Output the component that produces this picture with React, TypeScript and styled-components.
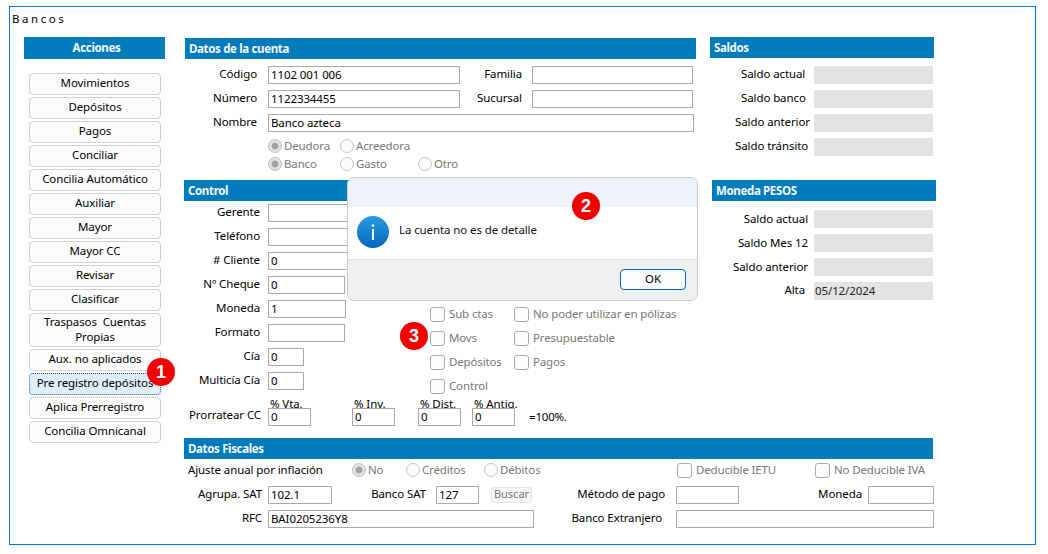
import React from "react";
import styled, { createGlobalStyle } from "styled-components";

const Global = createGlobalStyle`
  html, body { margin: 0; padding: 0; background: #fff; }
  body { font-family: "Noto Sans", "Open Sans", sans-serif; font-size: 11.5px; color: #000; letter-spacing: -0.1px; }
  * { box-sizing: border-box; }
`;

const Frame = styled.div`
  position: relative; margin: 6px 0 0 9px; width: 1027px; height: 539px;
  border: 1px solid #0f78cc; padding: 4px 0 0 14px; overflow: hidden;
`;
const Title = styled.div`
  height: 26px; line-height: 15px; margin-left: -12px; letter-spacing: 2.55px;
`;
const Layout = styled.div`
  display: grid; grid-template-columns: 141px 512px 226px; column-gap: 19px;
  grid-template-rows: 401px auto;
  & > :nth-child(3) { margin-left: -5px; }
`;
const Side = styled.aside`grid-row: 1 / span 2;`;
const Header = styled.div<{ $center?: boolean; $top?: number; $left?: number; $w?: number; $h?: number }>`
  height: ${p => p.$h ?? 21}px; line-height: 22px; background: #027bbb; color: #f4f8fb; font-weight: 700;
  padding-left: 4px; font-size: 11.5px; letter-spacing: -0.35px;
  text-align: ${p => (p.$center ? "center" : "left")};
  margin-top: ${p => p.$top ?? 0}px; margin-left: ${p => p.$left ?? 0}px;
  width: ${p => (p.$w ? `${p.$w}px` : "auto")};
`;
const Buttons = styled.div`
  display: flex; flex-direction: column; gap: 2px; margin: 14px 4px 0 5px;
`;
const ActionButton = styled.button<{ $focus?: boolean; $tall?: boolean }>`
  width: 132px; height: ${p => (p.$tall ? 34 : 22)}px; padding: 0 0 3px; font: inherit; letter-spacing: inherit; color: #000;
  line-height: 15px; border-radius: 4px;
  background: ${p => (p.$focus ? "#e0eef9" : "#fdfdfd")};
  border: 1px ${p => (p.$focus ? "dotted #0067c0" : "solid #d0d0d0")};
`;
const Section = styled.section``;
const Rows = styled.div<{ $top?: number }>`
  display: flex; flex-direction: column; gap: 6px; margin-top: ${p => p.$top ?? 6}px;
`;
const Row = styled.div`
  display: flex; align-items: center; height: 18px; white-space: nowrap;
`;
const Label = styled.label<{ $w: number; $gap?: number; $align?: string; $pl?: number; $up?: number }>`
  flex: none; width: ${p => p.$w}px; margin-right: ${p => p.$gap ?? 8}px;
  padding-left: ${p => p.$pl ?? 0}px;
  text-align: ${p => p.$align ?? "right"}; margin-top: -${p => p.$up ?? 3}px; line-height: 15px;
`;
const Input = styled.div<{ $w: number; $ml?: number }>`
  flex: none; width: ${p => p.$w}px; height: 18px; margin-left: ${p => p.$ml ?? 0}px;
  border: 1px solid #a9a9a9; background: #fff; padding-left: 2px; line-height: 15px;
  position: relative; overflow: hidden;
`;
const ReadOnly = styled.div`
  flex: none; width: 119px; height: 18px; background: #e3e3e3; padding-left: 1px; line-height: 17px; color: #222;
`;
const Choices = styled.div`
  display: grid; grid-auto-rows: 18px; margin: 5px 0 0 84px;
`;
const ChoiceRow = styled.div`display: flex; height: 18px; align-items: center;`;
const Choice = styled.span<{ $w?: number }>`
  display: inline-flex; align-items: center; gap: 2px; color: #777; white-space: nowrap; letter-spacing: -0.15px;
  width: ${p => (p.$w ? `${p.$w}px` : "auto")}; flex: none; line-height: 15px;
`;
const ChoiceText = styled.span`margin-top: -1px;`;
const RadioMark = styled.i<{ $on?: boolean }>`
  flex: none; width: 14px; height: 14px; border-radius: 50%; position: relative;
  border: 1px solid ${p => (p.$on ? "#bdbdbd" : "#c4c4c4")};
  background: ${p => (p.$on ? "radial-gradient(circle, #a2a2a2 0 3.2px, #e2e2e2 3.8px)" : "#fbfbfb")};
`;
const CheckMark = styled.i`
  flex: none; width: 15px; height: 15px; border-radius: 3px; border: 1.5px solid #ababab; background: #fdfdfd;
  margin-right: 2px;
`;
const ControlBody = styled.div`
  display: grid; grid-template-columns: 246px 1fr; margin-top: 1px;
`;
const Checks = styled.div`
  display: grid; grid-template-columns: 84px auto; grid-auto-rows: 24px; padding-top: 100px; align-items: center;
`;
const Prorate = styled.div`
  display: flex; align-items: flex-end; height: 29px; white-space: nowrap; margin-top: -1px;
`;
const ProrateLabel = styled.label`
  width: 77px; text-align: right; margin-right: 7px; line-height: 15px; padding-bottom: 4px;
`;
const Percent = styled.div<{ $ml: number }>`
  flex: none; width: 43px; margin-left: ${p => p.$ml}px; display: flex; flex-direction: column;
`;
const Caption = styled.span`
  height: 11px; line-height: 14px; padding-left: 2px; white-space: nowrap;
`;
const Equal = styled.span`margin: 0 0 1px 14px; line-height: 16px; letter-spacing: -0.2px;`;
const Fiscal = styled.section`grid-column: 2 / span 2; width: 749px; margin-top: 0;`;
const FiscalTop = styled(Row)`margin-top: 2px;`;
const Buscar = styled.button`
  flex: none; width: 41px; height: 16px; margin-left: 12px; padding: 0 0 2px; font: inherit; font-size: 11px; color: #777;
  border: 1px solid #e4e4e4; border-radius: 3px; background: #f6f6f6; line-height: 12px;
`;

const Modal = styled.div`
  position: absolute; left: 337px; top: 170px; width: 351px; height: 124px; border-radius: 7px;
  border: 1px solid #c9c9c9; overflow: hidden; background: #fff; display: flex; flex-direction: column;
`;
const ModalTop = styled.div`height: 29px; background: #eef2fa;`;
const ModalBody = styled.div`
  height: 52px; display: flex; align-items: center; gap: 10px; padding: 0 0 2px 9px; background: #fff; color: #111;
`;
const ModalText = styled.span`margin-top: -6px;`;
const ModalFoot = styled.div`
  flex: 1; background: #f0f0f0; border-top: 1px solid #dfdfdf; display: flex; justify-content: flex-end;
  align-items: flex-start; padding: 9px 11px 0 0;
`;
const OkButton = styled.button`
  width: 66px; height: 21px; padding: 0 0 3px; font: inherit; border: 1px solid #0067c0; border-radius: 4px; background: #fdfdfd; color: #000;
`;
const Badge = styled.span<{ $x: number; $y: number }>`
  position: absolute; left: ${p => p.$x}px; top: ${p => p.$y}px; width: 28px; height: 28px; border-radius: 50%;
  background: #f00000; color: #fff; font: 700 18px/28px "Liberation Sans", sans-serif; text-align: center;
`;

const actions = ["Movimientos", "Depósitos", "Pagos", "Conciliar", "Concilia Automático", "Auxiliar", "Mayor", "Mayor CC", "Revisar", "Clasificar"];
const after = ["Aux. no aplicados", "Pre registro depósitos", "Aplica Prerregistro", "Concilia Omnicanal"];

const Radio = ({ on, w, children }: { on?: boolean; w?: number; children: string }) => (
  <Choice $w={w}><RadioMark $on={on} /><ChoiceText>{children}</ChoiceText></Choice>
);
const Check = ({ w, children }: { w?: number; children: string }) => (
  <Choice $w={w}><CheckMark /><ChoiceText>{children}</ChoiceText></Choice>
);
const InfoIcon = () => (
  <svg width="32" height="32" viewBox="0 0 32 32">
    <defs>
      <linearGradient id="info" x1="0" y1="0" x2="0" y2="1">
        <stop offset="0" stopColor="#2a9be0" />
        <stop offset="1" stopColor="#0566bd" />
      </linearGradient>
    </defs>
    <circle cx="16" cy="16" r="16" fill="url(#info)" />
    <circle cx="16" cy="9.5" r="1.3" fill="#fff" />
    <rect x="15" y="13" width="2" height="11" fill="#fff" />
  </svg>
);

export default function App() {
  return (
    <>
      <Global />
      <Frame>
        <Title>Bancos</Title>
        <Layout>
          <Side>
            <Header $center $h={22}>Acciones</Header>
            <Buttons>
              {actions.map(a => <ActionButton key={a}>{a}</ActionButton>)}
              <ActionButton $tall>Traspasos&nbsp; Cuentas<br />Propias</ActionButton>
              {after.map(a => <ActionButton key={a} $focus={a.startsWith("Pre")}>{a}</ActionButton>)}
            </Buttons>
          </Side>
          <Section>
            <Header $top={1} $left={1}>Datos de la cuenta</Header>
            <Rows $top={7}>
              <Row>
                <Label $w={73} $gap={11}>Código</Label><Input $w={192}>1102 001 006</Input>
                <Label $w={62}>Familia</Label><Input $w={161} $ml={2}></Input>
              </Row>
              <Row>
                <Label $w={73} $gap={11}>Número</Label><Input $w={192}>1122334455</Input>
                <Label $w={62}>Sucursal</Label><Input $w={161} $ml={2}></Input>
              </Row>
              <Row>
                <Label $w={73} $gap={11}>Nombre</Label><Input $w={426}>Banco azteca</Input>
              </Row>
            </Rows>
            <Choices>
              <ChoiceRow><Radio on w={72}>Deudora</Radio><Radio w={78}>Acreedora</Radio></ChoiceRow>
              <ChoiceRow><Radio on w={72}>Banco</Radio><Radio w={78}>Gasto</Radio><Radio>Otro</Radio></ChoiceRow>
            </Choices>
            <Header $top={7}>Control</Header>
            <ControlBody>
              <Rows $top={2}>
                <Row><Label $w={76}>Gerente</Label><Input $w={120}></Input></Row>
                <Row><Label $w={76}>Teléfono</Label><Input $w={120}></Input></Row>
                <Row><Label $w={76}># Cliente</Label><Input $w={120}>0</Input></Row>
                <Row><Label $w={76}>Nº Cheque</Label><Input $w={77}>0</Input></Row>
                <Row><Label $w={76}>Moneda</Label><Input $w={78}>1</Input></Row>
                <Row><Label $w={76}>Formato</Label><Input $w={77}></Input></Row>
                <Row><Label $w={76}>Cía</Label><Input $w={36}>0</Input></Row>
                <Row><Label $w={76}>Multicía Cía</Label><Input $w={36}>0</Input></Row>
              </Rows>
              <Checks>
                <Check>Sub ctas</Check><Check>No poder utilizar en pólizas</Check>
                <Check>Movs</Check><Check>Presupuestable</Check>
                <Check>Depósitos</Check><Check>Pagos</Check>
                <Check>Control</Check>
              </Checks>
            </ControlBody>
            <Prorate>
              <ProrateLabel>Prorratear CC</ProrateLabel>
              <Percent $ml={0}><Caption>% Vta.</Caption><Input $w={43}>0</Input></Percent>
              <Percent $ml={41}><Caption>% Inv.</Caption><Input $w={43}>0</Input></Percent>
              <Percent $ml={23}><Caption>% Dist.</Caption><Input $w={43}>0</Input></Percent>
              <Percent $ml={11}><Caption>% Antig.</Caption><Input $w={43}>0</Input></Percent>
              <Equal>=100%.</Equal>
            </Prorate>
          </Section>
          <Section>
            <Header $w={224}>Saldos</Header>
            <Rows $top={8}>
              <Row><Label $w={104} $gap={0} $align="left" $pl={31}>Saldo actual</Label><ReadOnly /></Row>
              <Row><Label $w={104} $gap={0} $align="left" $pl={31}>Saldo banco</Label><ReadOnly /></Row>
              <Row><Label $w={104} $gap={0} $align="left" $pl={25}>Saldo anterior</Label><ReadOnly /></Row>
              <Row><Label $w={104} $gap={0} $align="left" $pl={25}>Saldo tránsito</Label><ReadOnly /></Row>
            </Rows>
            <Header $top={24} $left={2} $w={224}>Moneda PESOS</Header>
            <Rows $top={9}>
              <Row><Label $w={98} $gap={6} $up={1}>Saldo actual</Label><ReadOnly /></Row>
              <Row><Label $w={98} $gap={6} $up={1}>Saldo Mes 12</Label><ReadOnly /></Row>
              <Row><Label $w={98} $gap={6} $up={1}>Saldo anterior</Label><ReadOnly /></Row>
              <Row><Label $w={95} $gap={9}>Alta</Label><ReadOnly>05/12/2024</ReadOnly></Row>
            </Rows>
          </Section>
          <Fiscal>
            <Header>Datos Fiscales</Header>
            <FiscalTop>
              <Label $w={168} $gap={0} $align="left" $pl={4} $up={1}>Ajuste anual por inflación</Label>
              <Radio on w={54}>No</Radio><Radio w={78}>Créditos</Radio><Radio w={193}>Débitos</Radio>
              <Check w={138}>Deducible IETU</Check><Check>No Deducible IVA</Check>
            </FiscalTop>
            <Rows $top={7}>
              <Row>
                <Label $w={78} $gap={6}>Agrupa. SAT</Label><Input $w={64}>102.1</Input>
                <Label $w={94} $gap={10}>Banco SAT</Label><Input $w={43}>127</Input>
                <Buscar>Buscar</Buscar>
                <Label $w={133} $gap={11}>Método de pago</Label><Input $w={63}></Input>
                <Label $w={123} $gap={6}>Moneda</Label><Input $w={66}></Input>
              </Row>
              <Row>
                <Label $w={78} $gap={6}>RFC</Label><Input $w={266}>BAI0205236Y8</Input>
                <Label $w={128} $gap={14}>Banco Extranjero</Label><Input $w={258}></Input>
              </Row>
            </Rows>
          </Fiscal>
        </Layout>
        <Modal>
          <ModalTop />
          <ModalBody><InfoIcon /><ModalText>La cuenta no es de detalle</ModalText></ModalBody>
          <ModalFoot><OkButton>OK</OkButton></ModalFoot>
        </Modal>
        <Badge $x={137} $y={351}>1</Badge>
        <Badge $x={562} $y={185}>2</Badge>
        <Badge $x={390} $y={315}>3</Badge>
      </Frame>
    </>
  );
}
